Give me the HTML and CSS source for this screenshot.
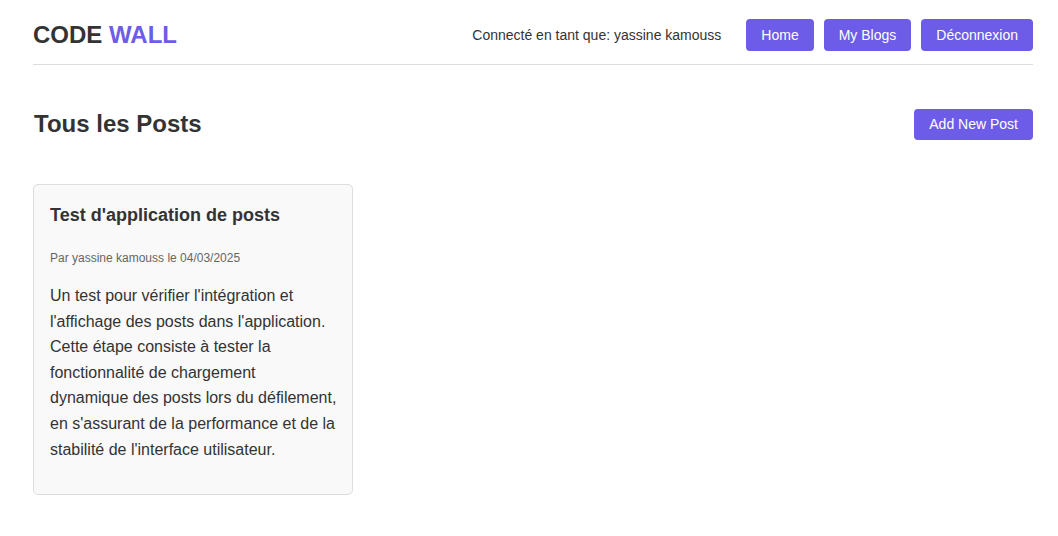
FILE: index.html
```html
<!DOCTYPE html>
<html lang="fr">
<head>
<meta charset="utf-8">
<title>Code Wall</title>
<link rel="stylesheet" href="styles.css">
</head>
<body>
<div class="page">
  <header class="header">
    <div class="logo">CODE <span class="accent">WALL</span></div>
    <nav class="nav">
      <span class="user">Connecté en tant que: yassine kamouss</span>
      <a class="btn" href="#">Home</a>
      <a class="btn" href="#">My Blogs</a>
      <a class="btn" href="#">Déconnexion</a>
    </nav>
  </header>
  <section class="top">
    <h1 class="page-title">Tous les Posts</h1>
    <a class="btn btn-add" href="#">Add New Post</a>
  </section>
  <div class="posts">
    <article class="card">
      <h3 class="card-title">Test d'application de posts</h3>
      <p class="meta">Par yassine kamouss le 04/03/2025</p>
      <p class="content">Un test pour vérifier l'intégration et l'affichage des posts dans l'application. Cette étape consiste à tester la fonctionnalité de chargement<br>dynamique des posts lors du défilement, en s'assurant de la performance et de la stabilité de l'interface utilisateur.</p>
    </article>
  </div>
</div>
</body>
</html>
```

FILE: styles.css
```css
* { box-sizing: border-box; }
body {
  margin: 0;
  font-family: "Liberation Sans", Arial, sans-serif;
  color: #333;
  background: #fff;
  line-height: 1.6;
}
.page {
  width: 1000px;
  margin-left: 33px;
}
.header {
  display: flex;
  justify-content: space-between;
  align-items: center;
  padding: 19px 0 13px;
  border-bottom: 1px solid #ddd;
}
.logo {
  font-size: 24px;
  font-weight: bold;
  color: #333;
  line-height: 32px;
}
.accent { color: #6c5ce7; }
.nav {
  display: flex;
  align-items: center;
  gap: 10px;
}
.user {
  font-size: 14px;
  color: #333;
  margin-right: 15px;
}
.btn {
  display: inline-block;
  background: #6c5ce7;
  color: #fff;
  text-decoration: none;
  font-size: 14px;
  line-height: 16px;
  padding: 8px 15px;
  border-radius: 4px;
}
.top {
  display: flex;
  justify-content: space-between;
  align-items: center;
  margin-top: 43px;
  height: 32px;
}
.page-title {
  margin: 0 0 0 1px;
  font-size: 24px;
  line-height: 32px;
  color: #333;
}
.btn-add {
  line-height: 15px;
}
.posts {
  display: grid;
  grid-template-columns: repeat(3, 320px);
  gap: 20px;
  margin-top: 44px;
}
.card {
  background: #f9f9f9;
  border: 1px solid #ddd;
  border-radius: 5px;
  padding: 16px;
}
.card-title {
  margin: 0 0 19px;
  font-size: 18px;
  color: #333;
}
.meta {
  margin: 0 0 15px;
  font-size: 12px;
  color: #666;
}
.content {
  margin: 0 -6px 16px 0;
  font-size: 16px;
  color: #333;
}
```
